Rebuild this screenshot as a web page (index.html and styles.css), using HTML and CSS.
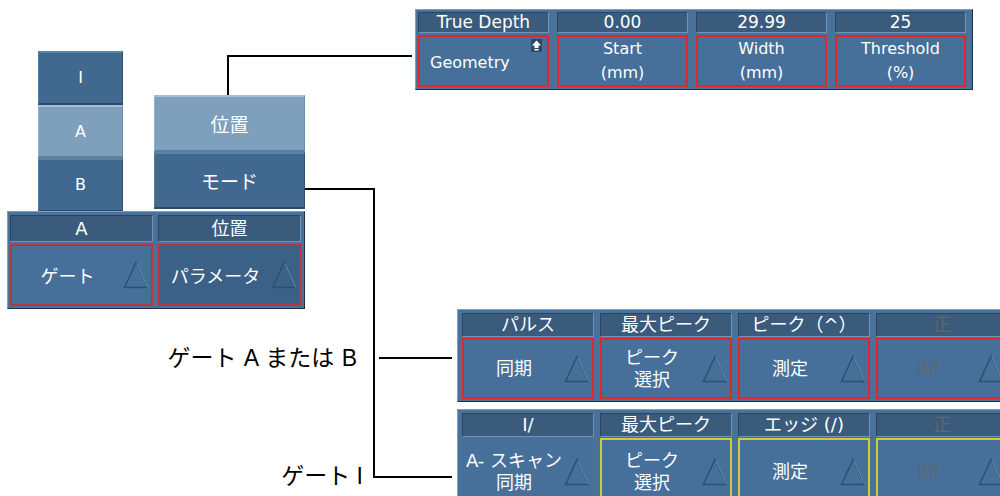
FILE: index.html
```html
<!DOCTYPE html>
<html lang="ja">
<head>
<meta charset="utf-8">
<title>Gate menu</title>
<link rel="stylesheet" href="styles.css">
</head>
<body>
<div class="canvas">

  <!-- top toolbar -->
  <div class="panel top-panel">
    <div class="col">
      <div class="hdr">True Depth</div>
      <div class="cell red geo">
        <span class="geo-text">Geometry</span>
        <svg class="updn" width="11" height="13" viewBox="0 0 11 13"><rect width="11" height="13" fill="#2d4966"/><polygon points="5.5,1.5 10,6.5 7.5,6.5 7.5,9 3.5,9 3.5,6.5 1,6.5" fill="#fff"/><rect x="3.5" y="10" width="4" height="1.5" fill="#fff"/></svg>
      </div>
    </div>
    <div class="col">
      <div class="hdr">0.00</div>
      <div class="cell red"><span class="txt">Start<br>(mm)</span></div>
    </div>
    <div class="col">
      <div class="hdr">29.99</div>
      <div class="cell red"><span class="txt">Width<br>(mm)</span></div>
    </div>
    <div class="col">
      <div class="hdr">25</div>
      <div class="cell red"><span class="txt">Threshold<br>(%)</span></div>
    </div>
  </div>

  <!-- gate selection stack -->
  <div class="stack abc">
    <div class="btn">I</div>
    <div class="btn on">A</div>
    <div class="btn">B</div>
  </div>

  <!-- position / mode stack -->
  <div class="stack pos">
    <div class="btn on jp">位置</div>
    <div class="btn jp">モード</div>
  </div>

  <!-- left bar -->
  <div class="panel left-panel">
    <div class="col">
      <div class="hdr">A</div>
      <div class="cell dred tri-cell"><span class="txt">ゲート</span><svg class="tri" width="26" height="28" viewBox="0 0 26 28"><polygon points="13,1.5 24.5,26.5 1.5,26.5" fill="none" stroke="#2f4f6e" stroke-width="1.5"/><line x1="13.8" y1="2.5" x2="24.8" y2="26.5" stroke="#6d92b5" stroke-width="1"/></svg></div>
    </div>
    <div class="col">
      <div class="hdr">位置</div>
      <div class="cell dred tri-cell dark"><span class="txt">パラメータ</span><svg class="tri" width="26" height="28" viewBox="0 0 26 28"><polygon points="13,1.5 24.5,26.5 1.5,26.5" fill="none" stroke="#2f4f6e" stroke-width="1.5"/><line x1="13.8" y1="2.5" x2="24.8" y2="26.5" stroke="#6d92b5" stroke-width="1"/></svg></div>
    </div>
  </div>

  <!-- labels -->
  <div class="label lab-ab">ゲート A または B</div>
  <div class="label lab-i">ゲート I</div>

  <!-- gate A/B panel -->
  <div class="panel wide row1">
    <div class="col">
      <div class="hdr">パルス</div>
      <div class="cell red tri-cell"><span class="txt">同期</span><svg class="tri" width="26" height="28" viewBox="0 0 26 28"><polygon points="13,1.5 24.5,26.5 1.5,26.5" fill="none" stroke="#2f4f6e" stroke-width="1.5"/><line x1="13.8" y1="2.5" x2="24.8" y2="26.5" stroke="#6d92b5" stroke-width="1"/></svg></div>
    </div>
    <div class="col">
      <div class="hdr">最大ピーク</div>
      <div class="cell red tri-cell"><span class="txt">ピーク<br>選択</span><svg class="tri" width="26" height="28" viewBox="0 0 26 28"><polygon points="13,1.5 24.5,26.5 1.5,26.5" fill="none" stroke="#2f4f6e" stroke-width="1.5"/><line x1="13.8" y1="2.5" x2="24.8" y2="26.5" stroke="#6d92b5" stroke-width="1"/></svg></div>
    </div>
    <div class="col">
      <div class="hdr">ピーク（^）</div>
      <div class="cell red tri-cell"><span class="txt">測定</span><svg class="tri" width="26" height="28" viewBox="0 0 26 28"><polygon points="13,1.5 24.5,26.5 1.5,26.5" fill="none" stroke="#2f4f6e" stroke-width="1.5"/><line x1="13.8" y1="2.5" x2="24.8" y2="26.5" stroke="#6d92b5" stroke-width="1"/></svg></div>
    </div>
    <div class="col">
      <div class="hdr dim">正</div>
      <div class="cell red tri-cell"><span class="txt dim">RF</span><svg class="tri" width="26" height="28" viewBox="0 0 26 28"><polygon points="13,1.5 24.5,26.5 1.5,26.5" fill="none" stroke="#2f4f6e" stroke-width="1.5"/><line x1="13.8" y1="2.5" x2="24.8" y2="26.5" stroke="#6d92b5" stroke-width="1"/></svg></div>
    </div>
  </div>

  <!-- gate I panel -->
  <div class="panel wide row2">
    <div class="col">
      <div class="hdr">I/</div>
      <div class="cell plain tri-cell"><span class="txt">A- スキャン<br>同期</span><svg class="tri" width="26" height="28" viewBox="0 0 26 28"><polygon points="13,1.5 24.5,26.5 1.5,26.5" fill="none" stroke="#2f4f6e" stroke-width="1.5"/><line x1="13.8" y1="2.5" x2="24.8" y2="26.5" stroke="#6d92b5" stroke-width="1"/></svg></div>
    </div>
    <div class="col">
      <div class="hdr">最大ピーク</div>
      <div class="cell yel tri-cell"><span class="txt">ピーク<br>選択</span><svg class="tri" width="26" height="28" viewBox="0 0 26 28"><polygon points="13,1.5 24.5,26.5 1.5,26.5" fill="none" stroke="#2f4f6e" stroke-width="1.5"/><line x1="13.8" y1="2.5" x2="24.8" y2="26.5" stroke="#6d92b5" stroke-width="1"/></svg></div>
    </div>
    <div class="col">
      <div class="hdr">エッジ (/)</div>
      <div class="cell yel tri-cell"><span class="txt">測定</span><svg class="tri" width="26" height="28" viewBox="0 0 26 28"><polygon points="13,1.5 24.5,26.5 1.5,26.5" fill="none" stroke="#2f4f6e" stroke-width="1.5"/><line x1="13.8" y1="2.5" x2="24.8" y2="26.5" stroke="#6d92b5" stroke-width="1"/></svg></div>
    </div>
    <div class="col">
      <div class="hdr dim">正</div>
      <div class="cell yel tri-cell"><span class="txt dim">RF</span><svg class="tri" width="26" height="28" viewBox="0 0 26 28"><polygon points="13,1.5 24.5,26.5 1.5,26.5" fill="none" stroke="#2f4f6e" stroke-width="1.5"/><line x1="13.8" y1="2.5" x2="24.8" y2="26.5" stroke="#6d92b5" stroke-width="1"/></svg></div>
    </div>
  </div>

  <!-- connector lines -->
  <svg class="wires" width="1000" height="496" viewBox="0 0 1000 496">
    <polyline points="228,95 228,56 412,56" fill="none" stroke="#000" stroke-width="2"/>
    <polyline points="305,189 374,189 374,477 452,477" fill="none" stroke="#000" stroke-width="2"/>
    <line x1="379" y1="358" x2="452" y2="358" stroke="#000" stroke-width="2"/>
  </svg>
</div>
</body>
</html>
```

FILE: styles.css
```css
* { box-sizing: border-box; }

html, body {
  margin: 0;
  padding: 0;
  background: #ffffff;
}

.canvas {
  position: relative;
  width: 1000px;
  height: 496px;
  overflow: hidden;
  font-family: "DejaVu Sans", "Noto Sans CJK JP", sans-serif;
  color: #ffffff;
}

/* ---------- generic panel ---------- */
.panel {
  position: absolute;
  display: grid;
  grid-template-columns: repeat(4, 1fr);
  background: #4a7299;
  border: 1px solid;
  border-color: #7aa0c2 #1d3044 #1d3044 #7aa0c2;
}

.col {
  display: grid;
  min-width: 0;
}

.hdr {
  background: #3a5b7b;
  border: 1px solid;
  border-color: #2b4560 #7095b8 #7095b8 #2b4560;
  text-align: center;
  white-space: nowrap;
  overflow: hidden;
}

.cell {
  display: flex;
  align-items: center;
  justify-content: center;
  text-align: center;
  background: #46709a;
  overflow: hidden;
}

.cell.red { border: 2px solid #e3262c; }
.cell.dred { border: 2px solid #b9343d; }
.cell.yel { border: 2px solid #cfcb3c; }
.cell.plain { border: 2px solid #46709a; }
.cell.dark { background: #3c6187; }

.tri-cell { justify-content: flex-start; padding-right: 2px; }
.tri-cell .txt { flex: 1; }
.tri { flex: none; }

.dim { color: #5f666c; }

/* ---------- top toolbar ---------- */
.top-panel {
  left: 415px;
  top: 9px;
  width: 558px;
  height: 81px;
  padding: 2px 6px 2px 2px;
  column-gap: 8px;
}
.top-panel .col { grid-template-rows: 21px 1fr; row-gap: 2px; }
.top-panel .hdr { font-size: 17px; line-height: 19px; }
.top-panel .cell { font-size: 16px; line-height: 24px; }
.top-panel .geo { justify-content: space-between; align-items: center; padding: 0 5px 0 10px; position: relative; }
.top-panel .geo-text { padding-top: 3px; }
.top-panel .updn { align-self: flex-start; margin-top: 2px; }

/* ---------- button stacks ---------- */
.stack {
  position: absolute;
  display: flex;
  flex-direction: column;
}
.btn {
  display: flex;
  align-items: center;
  justify-content: center;
  background: #41698f;
  border-top: 2px solid #5b83a9;
  border-bottom: 2px solid #2c4864;
  border-left: 1px solid #4f7aa2;
  border-right: 1px solid #30506f;
  font-size: 16px;
}
.btn.on {
  background: #7fa0bd;
  border-top-color: #a3bfd6;
  border-bottom-color: #5d7f9d;
  border-left-color: #93b2cc;
  border-right-color: #6a8cab;
}
.btn.jp { font-size: 19px; }

.abc { left: 38px; top: 51px; width: 85px; }
.abc .btn { height: 53.6px; }

.pos { left: 154px; top: 95px; width: 151px; }
.pos .btn { height: 57px; }

/* ---------- left bar ---------- */
.left-panel {
  left: 7px;
  top: 211px;
  width: 298px;
  height: 98px;
  grid-template-columns: 1fr 1fr;
  column-gap: 5px;
  padding: 3px 3px 2px 2px;
}
.left-panel .col { grid-template-rows: 27px 1fr; row-gap: 2px; }
.left-panel .hdr { font-size: 18px; line-height: 25px; }
.left-panel .cell { font-size: 18px; }

/* ---------- wide gate panels ---------- */
.wide {
  left: 457px;
  width: 570px;
  grid-template-columns: repeat(4, 132px);
  column-gap: 6px;
  padding: 3px 4px 2px 4px;
}
.wide .col { grid-template-rows: 24px 1fr; row-gap: 1px; }
.wide .hdr { font-size: 18px; line-height: 22px; }
.wide .cell { font-size: 18px; line-height: 22px; }

.row1 { top: 309px; height: 93px; }
.row2 { top: 409px; height: 100px; }

/* ---------- labels ---------- */
.label {
  position: absolute;
  color: #000;
  font-family: "Liberation Sans", "Noto Sans CJK JP", sans-serif;
  font-size: 23px;
  line-height: 26px;
  white-space: nowrap;
  text-align: right;
}
.lab-ab { right: 643px; top: 345px; word-spacing: 1px; }
.lab-i { right: 637px; top: 463px; }

/* ---------- wires ---------- */
.wires {
  position: absolute;
  left: 0;
  top: 0;
  pointer-events: none;
}
```
